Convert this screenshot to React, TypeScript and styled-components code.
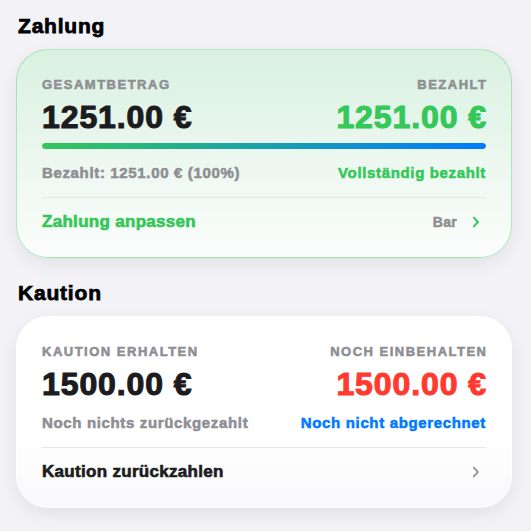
import React from 'react';
import styled, { createGlobalStyle, css } from 'styled-components';

const GlobalStyle = createGlobalStyle`
    body {
        margin: 0;
        background-color: #f2f2f7;
        font-family: 'Liberation Sans', Arial, sans-serif;
        -webkit-text-stroke-width: 0.55px;
    }
`;

const colors = {
    dark: '#1c1c1e',
    gray: '#8e8e93',
    green: '#34c759',
    red: '#ff3b30',
    blue: '#007aff',
    divider: '#e5e5ea'
};

type Tone = keyof typeof colors;

const payment = { total: 1251, paid: 1251 };
const deposit = { received: 1500, held: 1500 };

function euro(value: number) {
    return value.toFixed(2) + ' €';
}

function Chevron({ tone }: { tone: Tone }) {
    return (
        <ChevronIcon width="8" height="12" viewBox="0 0 8 12" fill="none">
            <path
                d="M1.8 1.6 L6 6 L1.8 10.4"
                stroke={colors[tone]}
                strokeWidth={tone === 'green' ? 2 : 1.8}
                strokeLinecap="round"
                strokeLinejoin="round"
            />
        </ChevronIcon>
    );
}

export default function App() {
    const percent = Math.round((payment.paid / payment.total) * 100);

    return (
        <Page>
            <GlobalStyle />
            <Section>
                <SectionTitle>Zahlung</SectionTitle>
                <Card $variant="success">
                    <StatsRow>
                        <Stat>
                            <Label>Gesamtbetrag</Label>
                            <Amount $tone="dark">{euro(payment.total)}</Amount>
                        </Stat>
                        <Stat $right>
                            <Label>Bezahlt</Label>
                            <Amount $tone="green">{euro(payment.paid)}</Amount>
                        </Stat>
                    </StatsRow>
                    <ProgressTrack>
                        <ProgressFill style={{ width: percent + '%' }} />
                    </ProgressTrack>
                    <CaptionRow $gap={14.5}>
                        <Caption $tone="gray">
                            Bezahlt: {euro(payment.paid)} ({percent}%)
                        </Caption>
                        <Caption $tone="green">Vollständig bezahlt</Caption>
                    </CaptionRow>
                    <Divider />
                    <ActionRow>
                        <ActionLabel $tone="green">Zahlung anpassen</ActionLabel>
                        <ActionMeta>
                            <MetaText>Bar</MetaText>
                            <Chevron tone="green" />
                        </ActionMeta>
                    </ActionRow>
                </Card>
            </Section>

            <Section>
                <SectionTitle>Kaution</SectionTitle>
                <Card $variant="plain">
                    <StatsRow>
                        <Stat>
                            <Label>Kaution erhalten</Label>
                            <Amount $tone="dark">{euro(deposit.received)}</Amount>
                        </Stat>
                        <Stat $right>
                            <Label>Noch einbehalten</Label>
                            <Amount $tone="red">{euro(deposit.held)}</Amount>
                        </Stat>
                    </StatsRow>
                    <CaptionRow $gap={12}>
                        <Caption $tone="gray">Noch nichts zurückgezahlt</Caption>
                        <Caption $tone="blue">Noch nicht abgerechnet</Caption>
                    </CaptionRow>
                    <Divider />
                    <ActionRow>
                        <ActionLabel $tone="dark">Kaution zurückzahlen</ActionLabel>
                        <ActionMeta>
                            <Chevron tone="gray" />
                        </ActionMeta>
                    </ActionRow>
                </Card>
            </Section>
        </Page>
    );
}

const Page = styled.div`
    display: flex;
    flex-direction: column;
    gap: 23px;
    padding: 14px 19px 24px 16px;
`;

const Section = styled.section`
    display: flex;
    flex-direction: column;
`;

const SectionTitle = styled.h2`
    margin: 0 0 11px 2px;
    font-size: 21px;
    line-height: 24px;
    font-weight: 700;
    letter-spacing: 0.8px;
    -webkit-text-stroke-width: 0.75px;
    color: #000;
`;

const Card = styled.div<{ $variant: 'success' | 'plain' }>`
    display: flex;
    flex-direction: column;
    padding: 27px 25px 25px 25px;
    border-radius: 32px;
    box-shadow: 0 6px 18px rgba(0, 0, 0, 0.07);

    ${(props) =>
        props.$variant === 'success'
            ? css`
                  border: 1px solid rgba(52, 199, 89, 0.35);
                  background: linear-gradient(180deg, #d9f1e1 0%, #ebf7ef 50%, #fbfdfc 100%);
              `
            : css`
                  border: 1px solid #ffffff;
                  background: linear-gradient(180deg, #ffffff 0%, #ffffff 60%, #f9f9fb 100%);
              `}
`;

const StatsRow = styled.div`
    display: flex;
    justify-content: space-between;
    align-items: flex-start;
`;

const Stat = styled.div<{ $right?: boolean }>`
    display: flex;
    flex-direction: column;
    gap: 6px;
    align-items: ${(props) => (props.$right ? 'flex-end' : 'flex-start')};
`;

const Label = styled.div`
    font-size: 13px;
    line-height: 16px;
    font-weight: 700;
    letter-spacing: 1.5px;
    margin-right: -1.5px;
    text-transform: uppercase;
    color: ${colors.gray};
`;

const Amount = styled.div<{ $tone: Tone }>`
    font-size: 32px;
    line-height: 36px;
    font-weight: 700;
    letter-spacing: 0.9px;
    margin-right: -0.9px;
    -webkit-text-stroke-width: 1.1px;
    color: ${(props) => colors[props.$tone]};
`;

const ProgressTrack = styled.div`
    margin-top: 8px;
    height: 6px;
    border-radius: 3px;
    background-color: #e5e5ea;
    overflow: hidden;
`;

const ProgressFill = styled.div`
    height: 100%;
    border-radius: 3px;
    background: linear-gradient(90deg, ${colors.green} 0%, ${colors.blue} 100%);
`;

const CaptionRow = styled.div<{ $gap: number }>`
    display: flex;
    justify-content: space-between;
    margin-top: ${(props) => props.$gap}px;
`;

const Caption = styled.div<{ $tone: Tone }>`
    font-size: 15px;
    line-height: 18px;
    font-weight: 700;
    letter-spacing: 0.65px;
    color: ${(props) => colors[props.$tone]};
`;

const Divider = styled.div`
    margin-top: 15px;
    height: 1px;
    background-color: ${colors.divider};
`;

const ActionRow = styled.div`
    display: flex;
    justify-content: space-between;
    align-items: center;
    margin-top: 14px;
    cursor: pointer;
`;

const ActionLabel = styled.div<{ $tone: Tone }>`
    font-size: 17px;
    line-height: 20px;
    font-weight: 700;
    letter-spacing: 0.3px;
    -webkit-text-stroke-width: 0.65px;
    color: ${(props) => colors[props.$tone]};
`;

const ActionMeta = styled.div`
    display: flex;
    align-items: center;
    gap: 15px;
    padding-right: 6px;
`;

const MetaText = styled.span`
    font-size: 14px;
    line-height: 18px;
    font-weight: 700;
    letter-spacing: 0.3px;
    color: ${colors.gray};
`;

const ChevronIcon = styled.svg`
    display: block;
    flex-shrink: 0;
`;
